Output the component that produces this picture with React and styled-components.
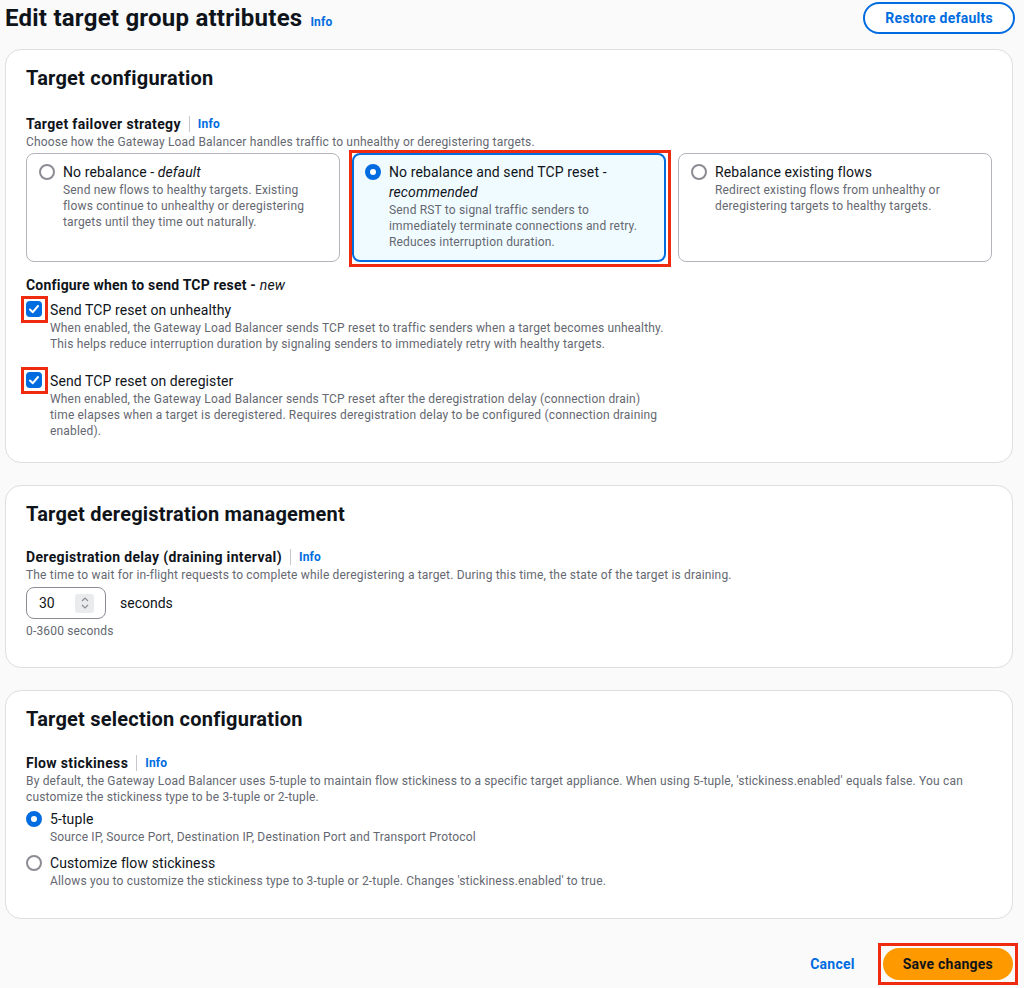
import React from 'react';
import styled, { createGlobalStyle, css } from 'styled-components';

const GlobalStyle = createGlobalStyle`
  body {
    margin: 0;
    background: #fafafa;
    font-family: Roboto, "Liberation Sans", Arial, sans-serif;
    color: #0f141a;
  }
`;

const blue = '#006ce0';
const grey = '#656871';
const marker = '#ee2b0e';

// red annotation box drawn over a highlighted control
const marked = inset => css`
  position: relative;
  &::after {
    content: '';
    position: absolute;
    inset: ${inset};
    border: 3px solid ${marker};
    pointer-events: none;
  }
`;

const Page = styled.div`
  padding: 2px 11px 0 5px;
`;

const Header = styled.div`
  display: flex;
  align-items: center;
  justify-content: space-between;
  margin-right: -2px;
`;

const TitleWrap = styled.div`
  display: flex;
  align-items: baseline;
  gap: 8px;
`;

const PageTitle = styled.h1`
  margin: 0;
  font-size: 24px;
  line-height: 30px;
  font-weight: 700;
  letter-spacing: 0.01em;
`;

const InfoLink = styled.a`
  font-size: 12px;
  font-weight: 700;
  color: ${blue};
  text-decoration: none;
  letter-spacing: 0.2px;
`;

const OutlineButton = styled.button`
  height: 32px;
  padding: 0 20px;
  border: 2px solid ${blue};
  border-radius: 20px;
  background: #fff;
  color: ${blue};
  font-family: inherit;
  font-size: 14px;
  font-weight: 700;
  letter-spacing: 0.25px;
`;

const Card = styled.section`
  margin-top: ${props => props.$top || 22}px;
  background: #fff;
  border: 1px solid #dedee3;
  border-radius: 16px;
  padding: 16px 20px ${props => props.$bottom || 24}px;
`;

const CardTitle = styled.h2`
  margin: 0;
  font-size: 20px;
  line-height: 24px;
  font-weight: 700;
  letter-spacing: 0.22px;
`;

const Field = styled.div`
  margin-top: ${props => props.$top || 22}px;
`;

const LabelRow = styled.div`
  display: flex;
  align-items: center;
  font-size: 14px;
  line-height: 20px;
  font-weight: 700;
  letter-spacing: 0.35px;
`;

const Divider = styled.span`
  width: 1px;
  height: 16px;
  background: #c6c6cd;
  margin: 0 8px;
`;

const Hint = styled.div`
  font-size: 12px;
  line-height: 16px;
  color: ${grey};
  letter-spacing: 0.17px;
  margin-top: ${props => props.$top || 0}px;
`;

const TileGrid = styled.div`
  display: grid;
  grid-template-columns: repeat(3, 1fr);
  gap: 12px;
  margin-top: 3px;
`;

const Tile = styled.div`
  display: flex;
  gap: 8px;
  align-items: flex-start;
  border-radius: 8px;
  border: ${props => (props.$selected ? `2px solid ${blue}` : '1px solid #b4b4bb')};
  background: ${props => (props.$selected ? '#f0fbff' : '#fff')};
  padding: ${props => (props.$selected ? '7px 11px 10px' : '8px 12px 11px')};
  ${props => props.$marked && marked('-5px -7px -7px -5px')}
`;

const Radio = styled.span`
  flex: none;
  box-sizing: border-box;
  width: 16px;
  height: 16px;
  margin-top: 2px;
  border-radius: 50%;
  background: #fff;
  border: ${props => (props.$checked ? `5px solid ${blue}` : '2px solid #8c8c94')};
`;

const OptionBody = styled.div`
  flex: 1;
`;

const OptionTitle = styled.div`
  font-size: 14px;
  line-height: 20px;
  letter-spacing: 0.1px;
  em {
    font-style: italic;
  }
`;

const SubHeading = styled.div`
  margin-top: 13px;
  font-size: 14px;
  line-height: 20px;
  font-weight: 700;
  letter-spacing: 0.2px;
  em {
    font-weight: 400;
  }
`;

const CheckRow = styled.div`
  display: flex;
  gap: 8px;
  align-items: flex-start;
  margin-top: ${props => props.$top}px;
`;

const CheckBox = styled.span`
  flex: none;
  width: 16px;
  height: 16px;
  margin-top: 1px;
  border-radius: 4px;
  background: ${blue};
  display: flex;
  align-items: center;
  justify-content: center;
  ${marked('-5px -6px -6px -5px')}
`;

const InputRow = styled.div`
  display: flex;
  align-items: center;
  gap: 14px;
  margin-top: 4px;
  font-size: 14px;
`;

const NumberBox = styled.div`
  box-sizing: border-box;
  width: 80px;
  height: 32px;
  border: 1px solid #8c8c94;
  border-radius: 8px;
  display: flex;
  align-items: center;
  justify-content: space-between;
  padding: 0 11px 0 12px;
  font-size: 14px;
`;

const Spinner = styled.span`
  width: 19px;
  height: 19px;
  border-radius: 3px;
  background: #e9ebed;
  display: flex;
  align-items: center;
  justify-content: center;
`;

const RadioRow = styled.div`
  display: flex;
  gap: 8px;
  align-items: flex-start;
  margin-top: ${props => props.$top}px;
`;

const Footer = styled.div`
  display: flex;
  justify-content: flex-end;
  align-items: center;
  gap: 8px;
  margin-top: 29px;
  padding-bottom: 9px;
`;

const LinkButton = styled.button`
  height: 32px;
  padding: 0 20px;
  border: none;
  background: none;
  color: ${blue};
  font-family: inherit;
  font-size: 14px;
  font-weight: 700;
  letter-spacing: 0.25px;
`;

const PrimaryButton = styled.button`
  height: 32px;
  padding: 0 20px;
  border: none;
  border-radius: 16px;
  background: #ff9900;
  color: #0f141a;
  font-family: inherit;
  font-size: 14px;
  font-weight: 700;
  letter-spacing: 0.25px;
  ${marked('-5px')}
`;

const Check = () => (
  <svg width="12" height="12" viewBox="0 0 12 12">
    <polyline points="2,6.5 4.8,9.2 10,3" fill="none" stroke="#fff" strokeWidth="2" strokeLinecap="round" strokeLinejoin="round" />
  </svg>
);

const Chevrons = () => (
  <svg width="10" height="14" viewBox="0 0 10 14">
    <polyline points="2,5 5,2 8,5" fill="none" stroke="#8c8c94" strokeWidth="1.2" />
    <polyline points="2,9 5,12 8,9" fill="none" stroke="#8c8c94" strokeWidth="1.2" />
  </svg>
);

const tiles = [
  {
    title: <>No rebalance - <em>default</em></>,
    text: 'Send new flows to healthy targets. Existing flows continue to unhealthy or deregistering targets until they time out naturally.',
  },
  {
    title: <>No rebalance and send TCP reset - <em>recommended</em></>,
    text: 'Send RST to signal traffic senders to immediately terminate connections and retry. Reduces interruption duration.',
    selected: true,
  },
  {
    title: 'Rebalance existing flows',
    text: 'Redirect existing flows from unhealthy or deregistering targets to healthy targets.',
  },
];

const Label = ({ children, info }) => (
  <LabelRow>
    {children}
    {info && (
      <>
        <Divider />
        <InfoLink href="#">Info</InfoLink>
      </>
    )}
  </LabelRow>
);

const App = () => {
  return (
    <Page>
      <GlobalStyle />
      <Header>
        <TitleWrap>
          <PageTitle>Edit target group attributes</PageTitle>
          <InfoLink href="#">Info</InfoLink>
        </TitleWrap>
        <OutlineButton>Restore defaults</OutlineButton>
      </Header>

      <Card $top={15} $bottom={23}>
        <CardTitle>Target configuration</CardTitle>
        <Field $top={24}>
          <Label info>Target failover strategy</Label>
          <Hint>Choose how the Gateway Load Balancer handles traffic to unhealthy or deregistering targets.</Hint>
          <TileGrid>
            {tiles.map((t, i) => (
              <Tile key={i} $selected={t.selected} $marked={t.selected}>
                <Radio $checked={t.selected} />
                <OptionBody>
                  <OptionTitle>{t.title}</OptionTitle>
                  <Hint>{t.text}</Hint>
                </OptionBody>
              </Tile>
            ))}
          </TileGrid>
        </Field>
        <SubHeading>
          Configure when to send TCP reset - <em>new</em>
        </SubHeading>
        <CheckRow $top={5}>
          <CheckBox><Check /></CheckBox>
          <OptionBody>
            <OptionTitle>Send TCP reset on unhealthy</OptionTitle>
            <Hint>
              When enabled, the Gateway Load Balancer sends TCP reset to traffic senders when a target becomes unhealthy.
              <br />
              This helps reduce interruption duration by signaling senders to immediately retry with healthy targets.
            </Hint>
          </OptionBody>
        </CheckRow>
        <CheckRow $top={19}>
          <CheckBox><Check /></CheckBox>
          <OptionBody>
            <OptionTitle>Send TCP reset on deregister</OptionTitle>
            <Hint>
              When enabled, the Gateway Load Balancer sends TCP reset after the deregistration delay (connection drain)
              <br />
              time elapses when a target is deregistered. Requires deregistration delay to be configured (connection draining
              <br />
              enabled).
            </Hint>
          </OptionBody>
        </CheckRow>
      </Card>

      <Card $bottom={28}>
        <CardTitle>Target deregistration management</CardTitle>
        <Field $top={21}>
          <Label info>Deregistration delay (draining interval)</Label>
          <Hint>The time to wait for in-flight requests to complete while deregistering a target. During this time, the state of the target is draining.</Hint>
          <InputRow>
            <NumberBox>
              30
              <Spinner><Chevrons /></Spinner>
            </NumberBox>
            seconds
          </InputRow>
          <Hint $top={4}>0-3600 seconds</Hint>
        </Field>
      </Card>

      <Card $bottom={29}>
        <CardTitle>Target selection configuration</CardTitle>
        <Field $top={22}>
          <Label info>Flow stickiness</Label>
          <Hint>
            By default, the Gateway Load Balancer uses 5-tuple to maintain flow stickiness to a specific target appliance. When using 5-tuple, 'stickiness.enabled' equals false. You can
            <br />
            customize the stickiness type to be 3-tuple or 2-tuple.
          </Hint>
          <RadioRow $top={4}>
            <Radio $checked />
            <OptionBody>
              <OptionTitle>5-tuple</OptionTitle>
              <Hint>Source IP, Source Port, Destination IP, Destination Port and Transport Protocol</Hint>
            </OptionBody>
          </RadioRow>
          <RadioRow $top={8}>
            <Radio />
            <OptionBody>
              <OptionTitle>Customize flow stickiness</OptionTitle>
              <Hint>Allows you to customize the stickiness type to 3-tuple or 2-tuple. Changes 'stickiness.enabled' to true.</Hint>
            </OptionBody>
          </RadioRow>
        </Field>
      </Card>

      <Footer>
        <LinkButton>Cancel</LinkButton>
        <PrimaryButton>Save changes</PrimaryButton>
      </Footer>
    </Page>
  );
};

export default App;
